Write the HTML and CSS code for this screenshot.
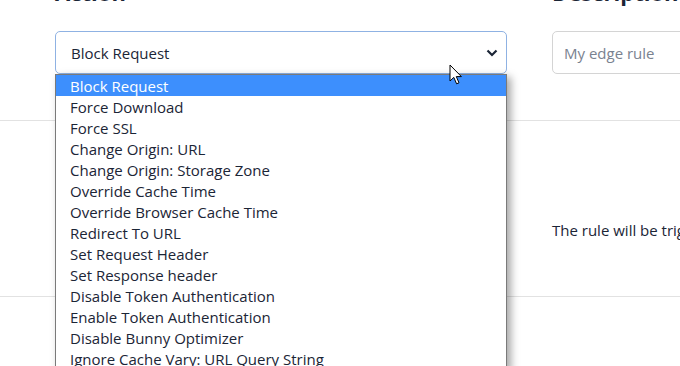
FILE: index.html
```html
<!DOCTYPE html>
<html lang="en">
<head>
  <meta charset="UTF-8" />
  <meta name="viewport" content="width=device-width, initial-scale=1.0" />
  <title>Edge Rule</title>
  <link rel="stylesheet" href="styles.css">
</head>
<body>
  <div class="page">
    <div class="form-row">
      <div class="field field-action">
        <h2>Action</h2>
        <div class="select-box">
          <span>Block Request</span>
          <svg class="chevron" width="12" height="8" viewBox="0 0 12 8">
            <path d="M1.5 1.5 L6 6 L10.5 1.5" fill="none" stroke="#1b2536" stroke-width="2.2" />
          </svg>
        </div>

        <ul class="dropdown">
          <li class="active">Block Request</li>
          <li>Force Download</li>
          <li>Force SSL</li>
          <li>Change Origin: URL</li>
          <li>Change Origin: Storage Zone</li>
          <li>Override Cache Time</li>
          <li>Override Browser Cache Time</li>
          <li>Redirect To URL</li>
          <li>Set Request Header</li>
          <li>Set Response header</li>
          <li>Disable Token Authentication</li>
          <li>Enable Token Authentication</li>
          <li>Disable Bunny Optimizer</li>
          <li>Ignore Cache Vary: URL Query String</li>
        </ul>

        <svg class="cursor" width="14" height="22" viewBox="0 0 14 22">
          <path d="M1 1 L1 17 L4.8 13.4 L7.6 19.8 L10 18.8 L7.3 12.6 L12.4 12.6 Z" fill="#fff" stroke="#000" stroke-width="1" stroke-linejoin="miter" />
        </svg>
      </div>

      <div class="field field-desc">
        <h2>Description</h2>
        <input type="text" class="text-input" placeholder="My edge rule" />
      </div>
    </div>

    <div class="section">
      <div class="section-left"></div>
      <p class="section-text">The rule will be triggered when the following conditions are met</p>
    </div>
  </div>
</body>
</html>
```

FILE: styles.css
```css
html {
  overflow: hidden;
}

body {
  margin: 0;
  padding: 0;
  min-height: 420px;
  font-family: "Open Sans", Arial, sans-serif;
  background: #fff;
  color: #1b2536;
}

.page {
  margin-top: -21px;
  min-height: 440px;
}

.form-row {
  display: flex;
  gap: 45px;
  padding-left: 55px;
}

.field {
  display: flex;
  flex-direction: column;
  flex-shrink: 0;
}

.field-action {
  width: 452px;
  position: relative;
}

.field-desc {
  width: 300px;
}

h2 {
  margin: 0 0 26px 0;
  font-size: 22px;
  line-height: 26px;
  font-weight: 700;
  color: #1b2536;
}

.select-box {
  height: 43px;
  box-sizing: border-box;
  border: 1px solid #8fb2e3;
  border-radius: 5px;
  display: flex;
  align-items: center;
  justify-content: space-between;
  padding: 0 8px 0 15px;
  font-size: 15px;
  color: #1b2536;
}

.chevron {
  margin-top: 1px;
}

.text-input {
  height: 43px;
  box-sizing: border-box;
  border: 1px solid #d4d4d4;
  border-radius: 5px;
  padding: 0 11px;
  font-family: inherit;
  font-size: 15px;
  color: #1b2536;
  outline: none;
}

.text-input::placeholder {
  color: #7a8290;
}

.dropdown {
  position: absolute;
  top: 95px;
  left: 0;
  width: 452px;
  box-sizing: border-box;
  margin: 0;
  padding: 0;
  list-style: none;
  background: #fff;
  border: 1px solid #7a7a7a;
  box-shadow: 4px 3px 8px rgba(0, 0, 0, 0.35);
  z-index: 2;
}

.dropdown li {
  height: 21px;
  line-height: 22px;
  padding-left: 14px;
  font-size: 15px;
  color: #1b2536;
  white-space: nowrap;
}

.dropdown li.active {
  background: #3d8ffd;
  color: #fff;
}

.cursor {
  position: absolute;
  top: 85px;
  left: 394px;
  z-index: 3;
}

.section {
  margin-top: 46px;
  border-top: 1px solid #e2e2e2;
  border-bottom: 1px solid #e2e2e2;
  height: 175px;
  display: flex;
  align-items: center;
  padding-left: 55px;
  gap: 45px;
  width: 900px;
}

.section-left {
  width: 452px;
  flex-shrink: 0;
}

.section-text {
  margin: 0;
  padding-top: 42px;
  font-size: 15px;
  white-space: nowrap;
  color: #1b2536;
}
```
